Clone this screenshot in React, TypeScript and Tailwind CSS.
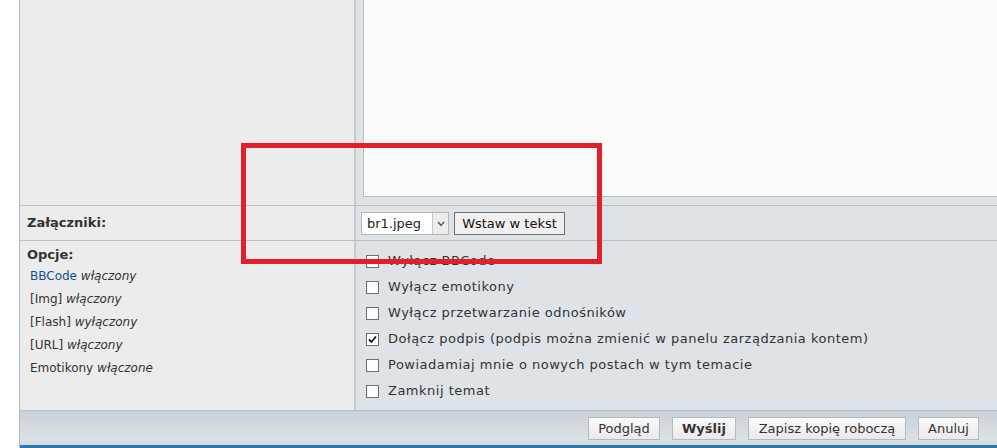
import React from 'react';

const options = [
  { label: 'Wyłącz BBCode', checked: false },
  { label: 'Wyłącz emotikony', checked: false },
  { label: 'Wyłącz przetwarzanie odnośników', checked: false },
  { label: 'Dołącz podpis (podpis można zmienić w panelu zarządzania kontem)', checked: true },
  { label: 'Powiadamiaj mnie o nowych postach w tym temacie', checked: false },
  { label: 'Zamknij temat', checked: false },
];

const status = [
  { name: 'BBCode', state: 'włączony', link: true },
  { name: '[Img]', state: 'włączony', link: false },
  { name: '[Flash]', state: 'wyłączony', link: false },
  { name: '[URL]', state: 'włączony', link: false },
  { name: 'Emotikony', state: 'włączone', link: false },
];

const Checkbox: React.FC<{ checked: boolean }> = ({ checked }) => (
  <span className="w-[13px] h-[13px] shrink-0 bg-white border border-[#6f6f6f] flex items-center justify-center">
    {checked && (
      <svg width="9" height="9" viewBox="0 0 9 9">
        <path d="M1 4.5 L3.5 7 L8 1.5" fill="none" stroke="#111" strokeWidth="1.8" />
      </svg>
    )}
  </span>
);

const FooterButton: React.FC<{ label: string; width: string; bold?: boolean }> = ({ label, width, bold }) => (
  <button
    className={`${width} h-[23px] border border-[#b4b9be] bg-gradient-to-b from-[#fbfbfb] to-[#e9e9e9] text-[13px] text-[#333] flex items-center justify-center ${bold ? 'font-bold' : ''}`}
  >
    {label}
  </button>
);

const App: React.FC = () => {
  return (
    <div className="relative w-[997px] h-[448px] overflow-hidden bg-white font-['DejaVu_Sans',Verdana,sans-serif] text-[#333]">
      <div className="ml-[19px] h-full border-l border-[#b3bbc3] flex flex-col">
        {/* message row */}
        <div className="flex h-[206px] border-b border-[#b8c0c8]">
          <div className="w-[334px] bg-[#ececec]" />
          <div className="flex-1 bg-[#dee3e7] border-l-2 border-[#c3cad1] pl-[7px] pb-[8px]">
            <div className="h-full bg-[#fafafa] border-l border-b border-[#b9bec3]" />
          </div>
        </div>

        {/* attachments row */}
        <div className="flex h-[35px] border-b border-[#b8c0c8]">
          <div className="w-[334px] bg-[#ececec] pl-[7px] flex items-center text-[13px] font-bold">
            Załączniki:
          </div>
          <div className="flex-1 bg-[#dee3e7] border-l-2 border-[#c3cad1] pl-[5px] pt-[1px] flex items-center gap-[5px]">
            <div className="w-[88px] h-[23px] bg-white border border-[#b5b5b5] flex items-center">
              <span className="flex-1 pl-[5px] text-[13px] text-[#222]">br1.jpeg</span>
              <span className="w-[16px] h-full bg-[#ececec] border-l border-[#c8c8c8] flex items-center justify-center">
                <svg width="8" height="6" viewBox="0 0 8 6">
                  <path d="M1 1 L4 4.5 L7 1" fill="none" stroke="#555" strokeWidth="1.4" />
                </svg>
              </span>
            </div>
            <button className="w-[111px] h-[23px] bg-[#f0f0f0] border border-[#707070] text-[13px] text-[#111] flex items-center justify-center">
              Wstaw w tekst
            </button>
          </div>
        </div>

        {/* options row */}
        <div className="flex h-[169px]">
          <div className="w-[334px] bg-[#ececec] pl-[7px] pt-[6px]">
            <div className="text-[13px] font-bold leading-[16px]">Opcje:</div>
            <div className="pl-[3px] mt-[2px]">
              {status.map((s) => (
                <div key={s.name} className="text-[12px] leading-[23px]">
                  <span className={s.link ? 'text-[#105289]' : ''}>{s.name}</span>{' '}
                  <span className="italic">{s.state}</span>
                </div>
              ))}
            </div>
          </div>
          <div className="flex-1 bg-[#dee3e7] border-l-2 border-[#c3cad1] pl-[10px] pt-[7px]">
            {options.map((o) => (
              <div key={o.label} className="h-[26px] flex items-center gap-[9px] text-[13px] tracking-[0.5px]">
                <Checkbox checked={o.checked} />
                <span>{o.label}</span>
              </div>
            ))}
          </div>
        </div>

        {/* submit buttons */}
        <div className="flex-1 flex flex-col border-t border-[#b8c0c8]">
          <div className="flex-1 bg-gradient-to-b from-[#c9d1d8] to-[#dde2e7] flex justify-end items-start pt-[6px] pr-[18px] gap-[12px]">
            <FooterButton label="Podgląd" width="w-[72px]" />
            <FooterButton label="Wyślij" width="w-[64px]" bold />
            <FooterButton label="Zapisz kopię roboczą" width="w-[158px]" />
            <FooterButton label="Anuluj" width="w-[61px]" />
          </div>
          <div className="h-[4px] bg-[#d6dce2]" />
          <div className="h-[3px] bg-[#2f79a8]" />
        </div>
      </div>

      {/* annotation */}
      <div className="absolute left-[241px] top-[143px] w-[361px] h-[121px] border-[5px] border-[#e3202a] pointer-events-none" />
    </div>
  );
};

export default App;
